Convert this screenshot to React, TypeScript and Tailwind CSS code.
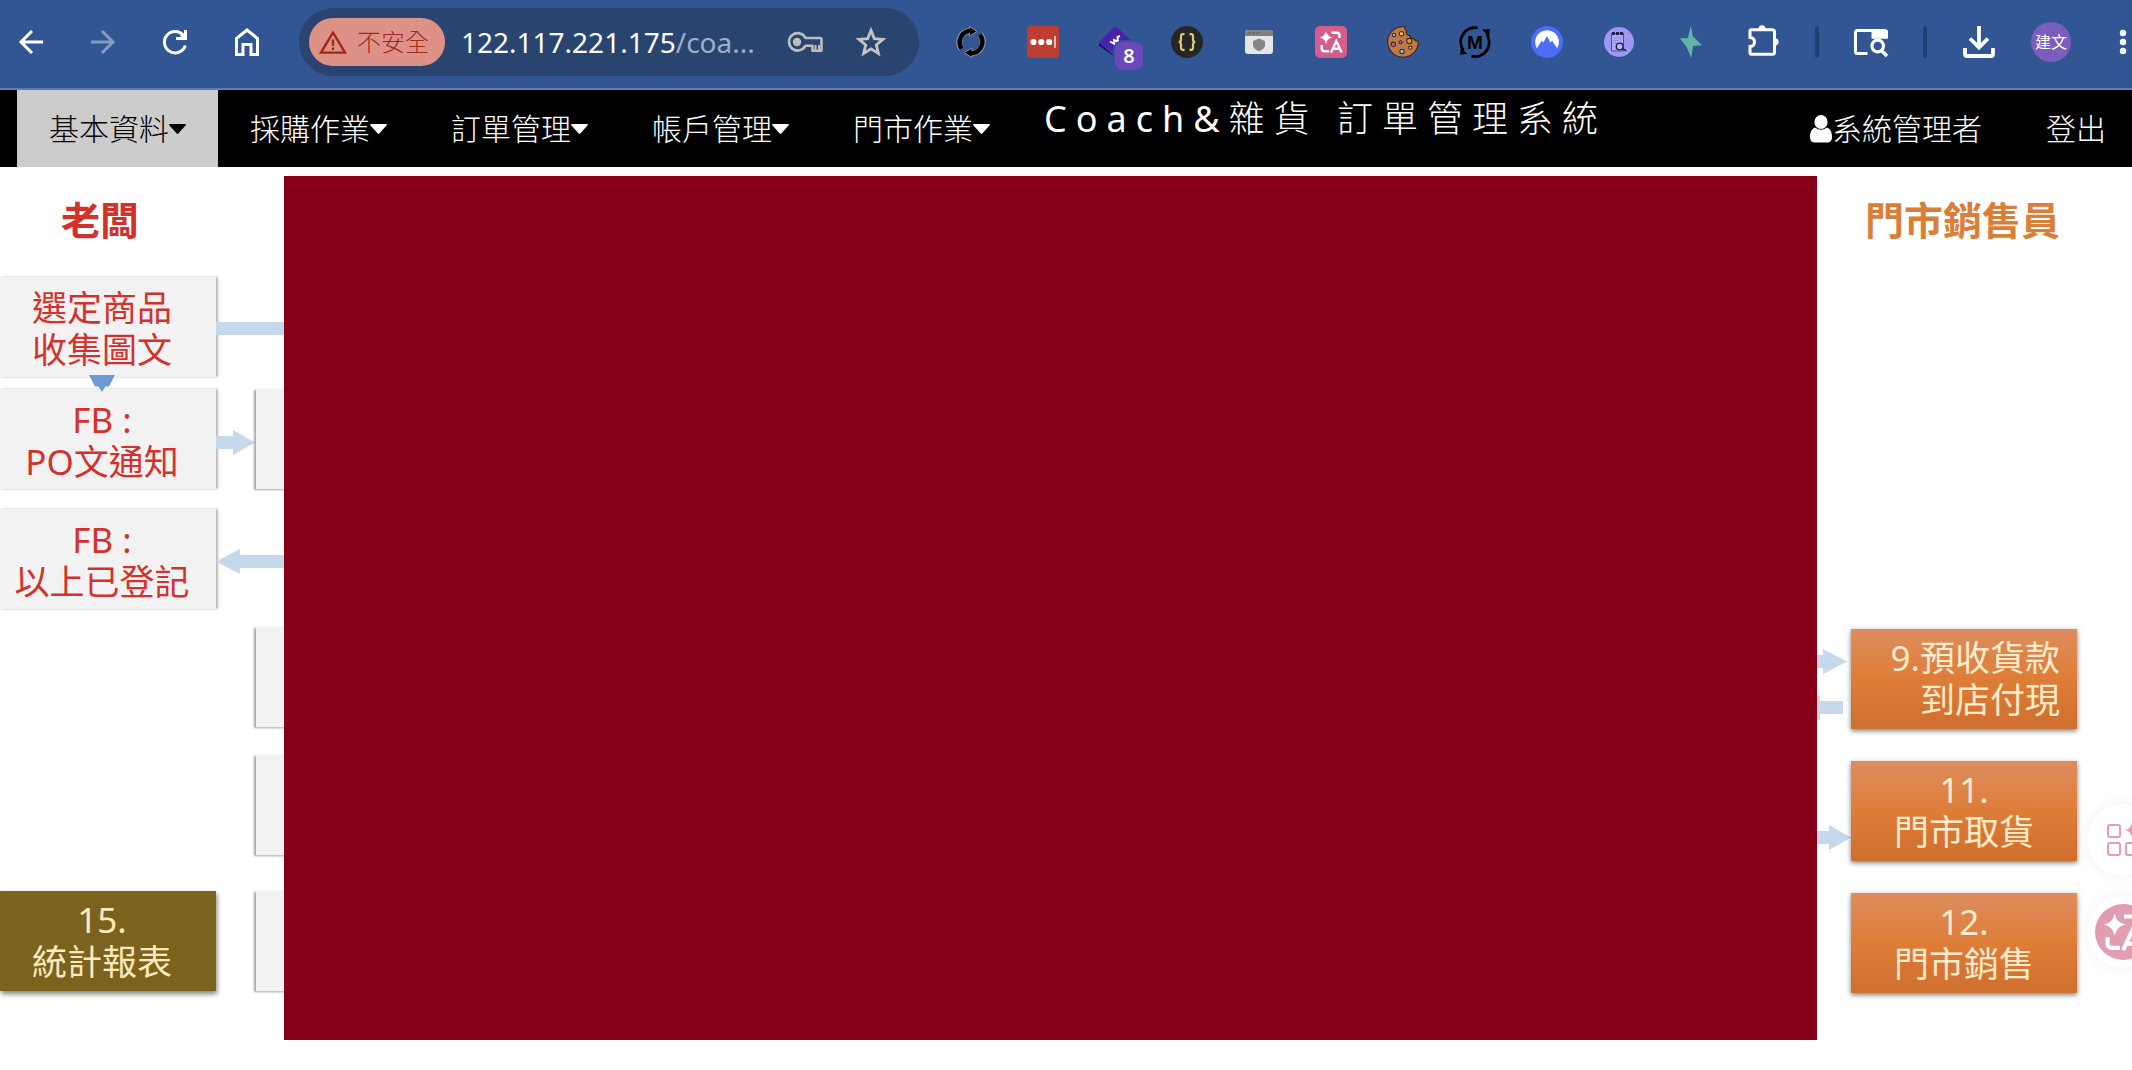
import React from 'react';

const UI_FONT = "font-['Noto_Sans','Noto_Sans_CJK_TC',sans-serif]";

interface IconButtonProps {
  label: string;
  className?: string;
  children: React.ReactNode;
}

const IconButton: React.FC<IconButtonProps> = ({ label, className = 'size-8', children }) => (
  <button type="button" aria-label={label} className={`relative shrink-0 cursor-pointer ${className}`}>
    {children}
  </button>
);

const ArrowIcon: React.FC<{ className?: string }> = ({ className = '' }) => (
  <svg viewBox="0 0 32 32" className={`size-8 ${className}`} fill="none" stroke="currentColor" strokeWidth="3">
    <path d="M28 16H6M17 5 6 16l11 11" />
  </svg>
);

const ReloadIcon = () => (
  <svg viewBox="0 0 32 32" className="size-8 text-white" fill="none" stroke="currentColor" strokeWidth="3">
    <path d="M26.300 19.500A10.700 10.700 0 1 1 24.500 9.500" />
    <path d="M26.500 4v8.500H17" />
    <path d="M22 8.500l4.500 4" />
  </svg>
);

const HomeIcon = () => (
  <svg viewBox="0 0 32 32" className="size-8 text-white" fill="none" stroke="currentColor" strokeWidth="3">
    <path d="M5.500 12.500 16 4l10.500 8.500V28.500h-6.500v-10h-8v10H5.500z" />
  </svg>
);

const WarningIcon = () => (
  <svg viewBox="0 0 28 24" className="h-6 w-7" fill="none" stroke="currentColor" strokeWidth="2.400">
    <path d="M14 2.500 26 22.600H2z" />
    <path d="M14 9.500v6.500M14 17.600v2.400" />
  </svg>
);

const KeyIcon = () => (
  <svg viewBox="0 0 36 24" className="h-6 w-9 text-[#bdbdbd]" fill="none" stroke="currentColor" strokeWidth="2.600" strokeLinejoin="round">
    <path d="M18.500 8h14.500a1.500 1.500 0 0 1 1.500 1.500v11.200h-9v-5h-7A8.700 8.700 0 1 1 18.500 8z" />
    <path d="M28.500 20v-5M32 20v-5" strokeWidth="2" />
    <circle cx="10" cy="12" r="4.200" fill="currentColor" stroke="none" />
  </svg>
);

const StarIcon = () => (
  <svg viewBox="0 0 32 32" className="size-8 text-[#c4c4c4]" fill="none" stroke="currentColor" strokeWidth="2.800">
    <path d="M16 4.500l3.300 8.100 8.700.7-6.700 5.600 2.100 8.600L16 22.900l-7.400 4.600 2.100-8.600L4 13.300l8.700-.7z" />
  </svg>
);

const SyncExtension = () => (
  <svg viewBox="0 0 32 32" className="size-8">
    <g fill="none" stroke="#8d94a0" strokeWidth="6">
      <path d="M6.500 23A11.500 11.500 0 0 1 15 4.800" />
      <path d="M25 8.500A11.500 11.500 0 0 1 17 27.400" />
    </g>
    <path d="M14.500 0.500 22 5.500l-7.500 4.500zM17 22v9.500l-8-4.800z" fill="#000" stroke="#8d94a0" strokeWidth="1" />
    <g fill="none" stroke="#000" strokeWidth="4.400">
      <path d="M6.700 22.800A11.500 11.500 0 0 1 16 4.800" />
      <path d="M24.800 8.700A11.500 11.500 0 0 1 16 27.400" />
    </g>
  </svg>
);

const PasswordExtension = () => (
  <svg viewBox="0 0 32 32" className="size-8">
    <rect width="32" height="32" rx="3" fill="#bd3d32" />
    <g fill="#fff">
      <circle cx="6.500" cy="16" r="3.100" />
      <circle cx="14.300" cy="16" r="3.100" />
      <circle cx="22.200" cy="16" r="3.100" />
    </g>
    <rect x="27" y="10" width="2" height="12" fill="#f0b9b4" />
  </svg>
);

const DiamondExtension = () => (
  <>
    <svg viewBox="0 0 32 32" className="size-8">
      <path d="M0 16.500 16 30v-4L32 14v4L16 31 0 20z" fill="#25107a" />
      <path d="M16 0 32 14 16 28 0 16z" fill="#4a21ab" />
      <path d="M11 15.500l4.500 2.500-.5-4 4 1.500-.5-4.500 2.500-1" fill="none" stroke="#fff" strokeWidth="2" />
    </svg>
    <span className="absolute left-3.5 top-3.5 flex size-8 items-center justify-center rounded-[10px] border-2 border-[#325694] bg-[#6a48bb] text-xl font-semibold text-white">8</span>
  </>
);

const BracesExtension = () => (
  <svg viewBox="0 0 32 32" className="size-8">
    <circle cx="16" cy="16" r="16" fill="#262626" />
    <g fill="none" stroke="#dccb6e" strokeWidth="2.200">
      <path d="M13.500 8.200h-1.700q-1.800 0-1.800 2v3.300q0 2.500-2.300 2.500 2.300 0 2.300 2.500v3.300q0 2 1.800 2h1.700" />
      <path d="M18.500 8.200h1.700q1.800 0 1.800 2v3.300q0 2.500 2.300 2.500-2.300 0-2.300 2.500v3.300q0 2-1.800 2h-1.700" />
    </g>
  </svg>
);

const ShieldWindowExtension = () => (
  <svg viewBox="0 0 32 32" className="size-8">
    <rect x="2" y="4" width="28" height="24" rx="3" fill="#e6e6e6" />
    <path d="M2 10V7a3 3 0 0 1 3-3h22a3 3 0 0 1 3 3v3z" fill="#808080" />
    <path d="M5.500 7h2M9.500 7h2M13.500 7h2" stroke="#5f5f5f" strokeWidth="1.500" />
    <path d="M16 12.500l6 2.500v4q0 4-6 6.200-6-2.200-6-6.200v-4z" fill="#858585" />
  </svg>
);

const TranslateMark = () => (
  <g>
    <path d="M11 5q.9 5.300 6.300 6.500Q11.900 12.700 11 18q-.9-5.300-6.300-6.500Q10.100 10.300 11 5z" fill="#fff" />
    <g fill="none" stroke="#fff" strokeWidth="2.400">
      <path d="M16.500 6.800h5.300q2.700 0 2.700 2.700V12" />
      <path d="M6.800 19v3.500q0 2.700 2.700 2.700H14" />
      <path d="M16 26.500 21.300 15l5.300 11.500M17.800 22.700h7" />
    </g>
  </g>
);

const TranslateExtension = () => (
  <svg viewBox="0 0 32 32" className="size-8">
    <rect width="32" height="32" rx="5" fill="#d55d8b" />
    <TranslateMark />
  </svg>
);

const CookieExtension = () => (
  <svg viewBox="0 0 32 32" className="size-8">
    <path d="M18 .8A15.300 15.300 0 1 0 31.300 15q-3.300.4-4.300-2.500-3.500.3-4.500-3-4-.5-3-4.500-2-1.500-1.500-4.200z" fill="#bd7a45" stroke="#3b2a2a" strokeWidth="1.200" />
    <g stroke="#3b2a2a" strokeWidth="1.100">
      <circle cx="7" cy="9" r="1.700" fill="#7cc8e8" />
      <circle cx="14.500" cy="7.700" r="2.200" fill="#f2c84b" />
      <circle cx="6.300" cy="18.300" r="2.200" fill="#d8528c" />
      <circle cx="13.700" cy="16.300" r="1.500" fill="#b06bd0" />
      <circle cx="22.300" cy="15" r="2.600" fill="#f29a2e" />
      <circle cx="23.300" cy="21.700" r="1.600" fill="#f2d24b" />
      <circle cx="15" cy="25.500" r="2.200" fill="#7cc8e8" />
    </g>
  </svg>
);

const MExtension = () => (
  <svg viewBox="0 0 32 32" className="size-8">
    <g fill="none" stroke="#000" strokeWidth="2.800">
      <path d="M4.300 24A14.300 14.300 0 0 1 18.500 1.800" />
      <path d="M27.600 8A14.300 14.300 0 0 1 12.500 30.200" />
    </g>
    <path d="M23 3.500 31 3l-1 8zM1 28.500l1-7.500 6 7z" fill="#000" />
    <text x="16" y="22.500" textAnchor="middle" className="fill-black font-['Liberation_Sans',sans-serif] text-[19px] font-bold">M</text>
  </svg>
);

const MountainExtension = () => (
  <svg viewBox="0 0 32 32" className="size-8">
    <circle cx="16" cy="16" r="16" fill="#4c6df6" />
    <path d="M5.800 22.500A12 12 0 1 1 26.200 22.500L21 14.500l-1.500 2.200L16 10l-3.800 6.700-1.400-2.200z" fill="#fff" />
  </svg>
);

const DocSearchExtension = () => (
  <svg viewBox="0 0 32 32" className="size-8">
    <circle cx="16" cy="16" r="15" fill="#9b97f2" />
    <path d="M8.500 7.500h12v17.500h-12z" fill="#aaa8f7" stroke="#4c4a9b" strokeWidth="1" />
    <path d="M9 7.500h12" stroke="#22224d" strokeWidth="3" strokeDasharray="3 1" />
    <path d="M10.500 12h8M10.500 14.500h5M10.500 17h4" stroke="#8f8ce6" />
    <circle cx="16.700" cy="20.500" r="3.400" fill="#b9b7fa" stroke="#22224d" strokeWidth="1.400" />
    <path d="M19.300 22.700l4 2" stroke="#22224d" strokeWidth="1.800" />
  </svg>
);

const BoltExtension = () => (
  <svg viewBox="0 0 32 32" className="size-8">
    <path d="M15.700 0 18 10.500 27 19.300 18 20 16.300 32 11.200 20.300 5 12.500 13 12z" fill="#62b5a6" />
  </svg>
);

const PuzzleIcon = () => (
  <svg viewBox="-1 0 32 32" className="size-8 overflow-visible text-white">
    <path d="M10.300 2.700a3.800 4.500 0 0 1 7.400 0zM28 12.300a4 3.900 0 0 1 0 7.400z" fill="currentColor" />
    <path d="M3.500 3.700h21a2 2 0 0 1 2 2v20.600a2 2 0 0 1-2 2H3.500a1.500 1.500 0 0 1-1.500-1.500v-6.200q4.500-.5 4.500-4.600T2 11.400V5.200a1.500 1.500 0 0 1 1.500-1.500z" fill="none" stroke="currentColor" strokeWidth="3" />
  </svg>
);

const SidePanelIcon = () => (
  <svg viewBox="0 0 32 32" className="size-8 overflow-visible text-white" fill="none" stroke="currentColor">
    <path d="M12.500 27.500H2.500a2 2 0 0 1-2-2V6.500a2 2 0 0 1 2-2h27a2 2 0 0 1 2 2V11H17" strokeWidth="3" />
    <path d="M17.500 5h14v6.500h-14z" fill="currentColor" strokeWidth="2" />
    <circle cx="22.700" cy="20" r="5.800" strokeWidth="3.200" />
    <path d="M26.500 24.500l5.500 5.500" strokeWidth="3.600" />
  </svg>
);

const DownloadIcon = () => (
  <svg viewBox="0 0 32 32" className="size-8 text-white" fill="none" stroke="currentColor" strokeWidth="3.800">
    <path d="M16 0v22M7 12.500l9 9 9-9" />
    <path d="M2 22v6q0 2 2 2h24q2 0 2-2v-6" />
  </svg>
);

const EXTENSIONS = [
  { label: 'Auto refresh', icon: <SyncExtension /> },
  { label: 'Password manager', icon: <PasswordExtension /> },
  { label: 'Wappalyzer', icon: <DiamondExtension /> },
  { label: 'JSON viewer', icon: <BracesExtension /> },
  { label: 'Privacy window', icon: <ShieldWindowExtension /> },
  { label: 'Translate', icon: <TranslateExtension /> },
  { label: 'Cookie editor', icon: <CookieExtension /> },
  { label: 'Markdown', icon: <MExtension /> },
  { label: 'VPN', icon: <MountainExtension /> },
  { label: 'Document search', icon: <DocSearchExtension /> },
  { label: 'Quick actions', icon: <BoltExtension /> },
  { label: 'Extensions', icon: <PuzzleIcon /> },
];

const BrowserToolbar = () => (
  <header className="flex h-[90px] items-center gap-9 border-b-2 border-[#5b7fb1] bg-[#325694] pb-1 pl-[15px]">
    <div className="flex gap-10">
      <IconButton label="Back"><ArrowIcon className="text-white" /></IconButton>
      <IconButton label="Forward"><ArrowIcon className="rotate-180 text-[#879cc3]" /></IconButton>
      <IconButton label="Reload"><ReloadIcon /></IconButton>
      <IconButton label="Home"><HomeIcon /></IconButton>
    </div>

    <div className="flex h-[68px] min-w-0 flex-1 items-center rounded-full bg-[#2a4470] pl-2.5 pr-8">
      <button type="button" className="flex h-12 shrink-0 items-center gap-2.5 rounded-full bg-[#de9186] px-2.5 pr-4 text-2xl font-light text-[#a3281e]">
        <WarningIcon />
        不安全
      </button>
      <div className="flex min-w-0 flex-1 items-center pl-4 text-[28px] text-[#9dafc9]">
        <input
          aria-label="Address"
          readOnly
          value="122.117.221.175"
          className="min-w-0 text-white outline-none [field-sizing:content]"
        />
        <span>/coa...</span>
      </div>
      <div className="flex items-center gap-8">
        <IconButton label="Saved passwords" className="h-6 w-9"><KeyIcon /></IconButton>
        <IconButton label="Bookmark this page"><StarIcon /></IconButton>
      </div>
    </div>

    <div className="flex gap-10">
      {EXTENSIONS.map(ext => (
        <IconButton key={ext.label} label={ext.label}>{ext.icon}</IconButton>
      ))}
    </div>
    <span className="h-8 w-1 rounded-full bg-[#233f70]" />
    <IconButton label="Side panel"><SidePanelIcon /></IconButton>
    <span className="h-8 w-1 rounded-full bg-[#233f70]" />
    <IconButton label="Downloads"><DownloadIcon /></IconButton>
    <button type="button" className="size-10 shrink-0 rounded-full bg-[#7a5dbd] text-base text-white">建文</button>
    <IconButton label="Menu" className="h-8 w-[25px]">
      <svg viewBox="0 0 25 32" className="h-8 w-[25px] fill-white">
        <circle cx="16" cy="7" r="3.200" />
        <circle cx="16" cy="16" r="3.200" />
        <circle cx="16" cy="25" r="3.200" />
      </svg>
    </IconButton>
  </header>
);

const MENUS = ['基本資料', '採購作業', '訂單管理', '帳戶管理', '門市作業'];

const SiteNav = () => (
  <nav className="flex h-[77px] items-stretch bg-black pl-[17px] text-[30px] font-light text-white">
    <ul className="flex">
      {MENUS.map((menu, i) => (
        <li key={menu} className="flex">
          <a href="#" className={`flex items-center px-8 ${i === 0 ? 'bg-[#ccc] text-black' : ''}`}>
            {menu}
            <svg viewBox="0 0 17 10" className="h-2.5 w-[17px] fill-current">
              <path d="M1 0h15q1.500.3.500 1.500L9.500 9.300q-1 1-2 0L.5 1.500Q-.5.300 1 0z" />
            </svg>
          </a>
        </li>
      ))}
    </ul>
    <h1 className="whitespace-nowrap pl-[22px] pt-1 text-4xl leading-[50px] font-light tracking-[0.25em]">
      <span className="font-normal">Coach&amp;</span>雜貨 訂單管理系統
    </h1>
    <div className="ml-auto flex items-center gap-16 pr-[26px]">
      <a href="#" className="flex items-center">
        <svg viewBox="0 0 22 28" className="h-7 w-[22px] fill-current">
          <ellipse cx="11" cy="7" rx="6.600" ry="7" />
          <path d="M5 12.500q6 4.500 12 0 5 2 5 9.500 0 5-4 5.500H4Q0 27 0 22q0-7.500 5-9.500z" />
        </svg>
        系統管理者
      </a>
      <a href="#">登出</a>
    </div>
  </nav>
);

type Link = 'line' | 'right' | 'left';

const LINKS: Record<Link, string> = {
  line: 'M0 45h68v13H0z',
  right: 'M0 47h17v-6l22 12.500L17 66v-6H0z',
  left: 'M68 46H24v-6L0 52.500 24 65v-6h44z',
};

interface BossRow {
  text?: string;
  link?: Link;
  stub?: boolean;
  spacing: string;
  box?: string;
}

const GREY_BOX = 'bg-[#f2f2f2] pt-[10px] text-[#d2322d] shadow-[2px_0_2px_rgba(0,0,0,0.28)]';
const OLIVE_BOX = 'bg-[#7b621d] pt-2 text-[#fbe9bd] shadow-[1px_3px_5px_rgba(0,0,0,0.5)]';

const BOSS_ROWS: BossRow[] = [
  { text: '選定商品\n收集圖文', link: 'line', spacing: 'mt-10', box: GREY_BOX },
  { text: 'FB :\nPO文通知', link: 'right', stub: true, spacing: 'mt-3', box: GREY_BOX },
  { text: 'FB :\n以上已登記', link: 'left', spacing: 'mt-5', box: GREY_BOX },
  { stub: true, spacing: 'mt-[18px]' },
  { stub: true, spacing: 'mt-7' },
  { text: '15.\n統計報表', stub: true, spacing: 'mt-9', box: OLIVE_BOX },
];

const BossLane = () => (
  <section className="flex w-[284px] shrink-0 flex-col overflow-hidden pb-[49px] pt-6">
    <h2 className="h-[37px] w-[200px] text-center text-[39px] leading-10 font-bold text-[#d2322d]">老闆</h2>
    {BOSS_ROWS.map((row, i) => (
      <div key={i} className={`relative flex h-[100px] ${row.spacing}`}>
        <div className={`w-[216px] shrink-0 pr-3 text-center text-[35px] leading-[42px] whitespace-pre-line ${row.box ?? ''}`}>
          {row.text}
        </div>
        <svg viewBox={row.stub ? '0 0 40 100' : '0 0 68 100'} className={`h-[100px] shrink-0 fill-[#c5d8ec] ${row.stub ? 'w-10' : 'w-[68px]'}`}>
          {row.link && <path d={LINKS[row.link]} />}
        </svg>
        {row.stub && (
          <div className="-mr-2 flex-1 bg-[#f2f2f2] shadow-[-2px_1px_2px_rgba(0,0,0,0.35)]" />
        )}
        {i === 0 && (
          <svg viewBox="0 0 26 17" className="absolute left-[89px] top-[98px] z-10 h-[17px] w-[26px] fill-[#6c9bd3]">
            <path d="M0 0h26l-6 11.500h-3.500L13 17l-3.500-5.500H6z" />
          </svg>
        )}
      </div>
    ))}
  </section>
);

const STORE_ROWS = [
  { text: '9.預收貨款\n到店付現', align: 'pr-[17px] text-right', link: 'M0 26h6v-6l24 12.500L6 45v-6H0zM26 72H3v-6l-3 1.500v23L3 91v-6h23z' },
  { text: '11.\n門市取貨', align: 'text-center', link: 'M0 70h12v-6l22 12.500L12 89v-6H0z' },
  { text: '12.\n門市銷售', align: 'text-center', link: '' },
];

const StoreLane = () => (
  <section className="w-[315px] shrink-0 pt-6">
    <h2 className="h-[37px] pr-6 text-center text-[39px] leading-10 font-bold text-[#da7f38]">門市銷售員</h2>
    <div className="mt-[392px] flex flex-col gap-8">
      {STORE_ROWS.map(row => (
        <div key={row.text} className="flex h-[100px]">
          <svg viewBox="0 0 34 100" className="h-[100px] w-[34px] fill-[#c5d8ec]">
            {row.link && <path d={row.link} />}
          </svg>
          <div className={`w-[226px] bg-linear-to-b from-[#dd8d5d] via-[#de7d38] to-[#cf6f2e] pt-2 text-[35px] leading-[42px] whitespace-pre-line text-[#fdeccb] shadow-[0_2px_5px_rgba(0,0,0,0.5)] ${row.align}`}>
            {row.text}
          </div>
        </div>
      ))}
    </div>
  </section>
);

const FloatingTools = () => (
  <div className="absolute -right-[27px] top-[804px] flex flex-col gap-5">
    <button type="button" aria-label="Tools" className="flex size-[72px] items-center justify-center rounded-full bg-white shadow-[0_0_16px_rgba(0,0,0,0.06)]">
      <svg viewBox="0 0 32 32" className="size-8 overflow-visible" fill="none" stroke="#e29eb1" strokeWidth="2">
        <rect x="1" y="1" width="12" height="12" rx="2" />
        <rect x="1" y="19" width="12" height="12" rx="2" />
        <rect x="19" y="19" width="12" height="12" rx="2" />
        <path d="M25-2q1 7 7 8-6 1-7 8-1-7-7-8 6-1 7-8z" fill="#e29eb1" stroke="none" />
      </svg>
    </button>
    <button type="button" aria-label="Translate page" className="flex size-[72px] items-center justify-center rounded-full bg-white shadow-[0_0_16px_rgba(0,0,0,0.06)]">
      <svg viewBox="0 0 56 56" className="size-14">
        <circle cx="28" cy="28" r="28" fill="#e29eb1" />
        <g transform="translate(1 1) scale(1.700)"><TranslateMark /></g>
      </svg>
    </button>
  </div>
);

export default function App() {
  return (
    <div className={`relative min-h-screen overflow-hidden bg-white ${UI_FONT}`}>
      <BrowserToolbar />
      <SiteNav />
      <main className="mt-[9px] flex items-stretch">
        <BossLane />
        <section className="flex-1 bg-[#880015]" />
        <StoreLane />
      </main>
      <FloatingTools />
    </div>
  );
}
